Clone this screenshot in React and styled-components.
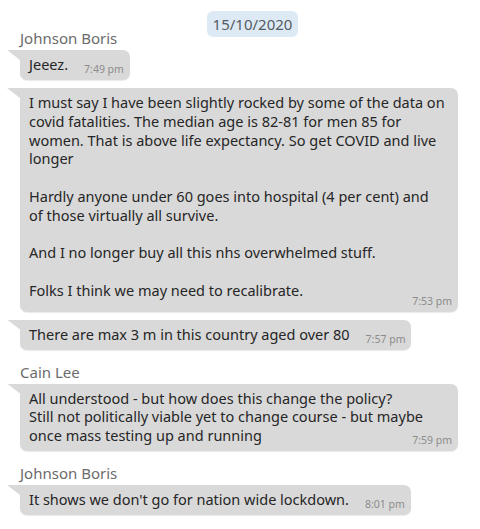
import React from "react";
import styled, { createGlobalStyle } from "styled-components";

const GlobalStyle = createGlobalStyle`
  body {
    margin: 0;
    background: #ffffff;
    font-family: "Noto Sans", "Open Sans", sans-serif;
  }
`;

const Chat = styled.div`
  position: relative;
  box-sizing: border-box;
  width: 480px;
  height: 529px;
  overflow: hidden;
  padding: 29px 22px 0 20px;
  display: flex;
  flex-direction: column;
  gap: 13px;
`;

const DateBadge = styled.div`
  position: absolute;
  top: 11px;
  left: 207px;
  width: 91px;
  height: 26px;
  border-radius: 6px;
  background: #ddeaf6;
  color: #555b61;
  font-size: 15px;
  line-height: 26px;
  text-align: center;
`;

const Group = styled.div`
  display: flex;
  flex-direction: column;
  gap: 3px;
`;

const Name = styled.div`
  color: #6b6b6b;
  font-size: 15px;
  line-height: 18px;
`;

const Bubbles = styled.div`
  display: flex;
  flex-direction: column;
  align-items: flex-start;
  gap: 8px;
`;

const Bubble = styled.div`
  position: relative;
  align-self: ${props => (props.$wide ? "stretch" : "flex-start")};
  padding: 5px 6px 5px 9px;
  background: #d9d9d9;
  border-radius: 0 7px 7px 7px;
  box-shadow: 0 1px 1px rgba(0, 0, 0, 0.08);
  color: #262626;
  font-size: 14.5px;
  line-height: 18.75px;
  white-space: pre;

  &::before {
    content: "";
    position: absolute;
    top: 0;
    left: -13px;
    width: 13px;
    height: 10px;
    background: #d9d9d9;
    clip-path: polygon(0 0, 100% 0, 100% 100%);
  }
`;

const Time = styled.span`
  float: right;
  margin: ${props => props.$drop}px 0 0 16px;
  color: #8c8c8c;
  font-size: 10.5px;
  line-height: 11px;
`;

const groups = [
  {
    name: "Johnson Boris",
    messages: [
      { text: "Jeeez.", time: "7:49 pm" },
      {
        text:
          "I must say I have been slightly rocked by some of the data on\n" +
          "covid fatalities. The median age is 82-81 for men 85 for\n" +
          "women. That is above life expectancy. So get COVID and live\n" +
          "longer\n\n" +
          "Hardly anyone under 60 goes into hospital (4 per cent) and\n" +
          "of those virtually all survive.\n\n" +
          "And I no longer buy all this nhs overwhelmed stuff.\n\n" +
          "Folks I think we may need to recalibrate.",
        time: "7:53 pm",
        wide: true,
        drop: 15,
      },
      { text: "There are max 3 m in this country aged over 80", time: "7:57 pm" },
    ],
  },
  {
    name: "Cain Lee",
    messages: [
      {
        text:
          "All understood - but how does this change the policy?\n" +
          "Still not politically viable yet to change course - but maybe\n" +
          "once mass testing up and running",
        time: "7:59 pm",
        wide: true,
      },
    ],
  },
  {
    name: "Johnson Boris",
    messages: [{ text: "It shows we don't go for nation wide lockdown.", time: "8:01 pm" }],
  },
];

const App = () => {
  return (
    <>
      <GlobalStyle />
      <Chat>
        <DateBadge>15/10/2020</DateBadge>
        {groups.map((group, i) => (
          <Group key={i}>
            <Name>{group.name}</Name>
            <Bubbles>
              {group.messages.map((msg, j) => (
                <Bubble key={j} $wide={msg.wide}>
                  {msg.text}
                  <Time $drop={msg.drop || 9}>{msg.time}</Time>
                </Bubble>
              ))}
            </Bubbles>
          </Group>
        ))}
      </Chat>
    </>
  );
};

export default App;
